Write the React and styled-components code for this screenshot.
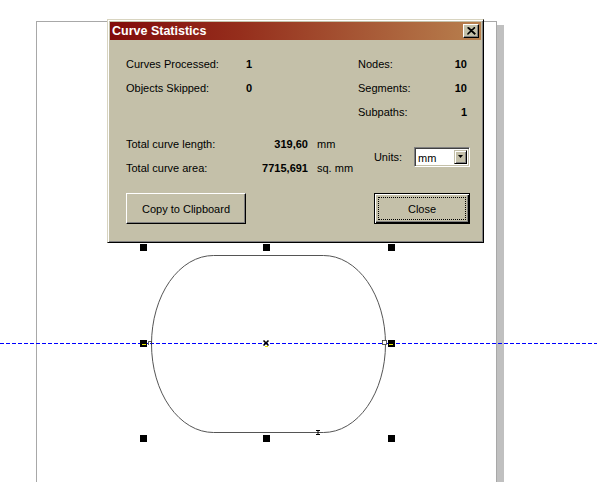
import React from "react";
import styled, { createGlobalStyle } from "styled-components";

const GlobalStyle = createGlobalStyle`
  html, body {
    margin: 0;
    padding: 0;
    background: #fff;
  }
  body {
    font-family: "Liberation Sans", Arial, sans-serif;
  }
`;

const FACE = "#c4c0a9";

const Workspace = styled.div`
  position: relative;
  width: 597px;
  height: 482px;
  overflow: hidden;
  background: #fff;
`;

const Page = styled.div`
  position: absolute;
  left: 36px;
  top: 21px;
  width: 459px;
  height: 480px;
  border: 1px solid #a8a8a8;
  background: #fff;
  box-shadow: 7px 4px 0 0 #c0c0c0;
`;

/* horizontal guideline dragged from the ruler */
const Guide = styled.div`
  position: absolute;
  left: 0;
  top: ${(p) => p.$y}px;
  width: 597px;
  height: 1px;
  background: repeating-linear-gradient(
    to right,
    #0000ff 0 4px,
    transparent 4px 6px
  );
`;

const Drawing = styled.svg`
  position: absolute;
  left: 0;
  top: 0;
  width: 597px;
  height: 482px;
`;

const Dialog = styled.div`
  position: absolute;
  left: 107px;
  top: 19px;
  width: 377px;
  height: 224px;
  box-sizing: border-box;
  background: ${FACE};
  border-top: 1px solid #d8d4c0;
  border-left: 1px solid #d8d4c0;
  border-right: 1px solid #000;
  border-bottom: 1px solid #000;
  box-shadow: inset 1px 1px 0 #fff, inset -1px -1px 0 #808080;
  padding: 2px;
  display: flex;
  flex-direction: column;
`;

const TitleBar = styled.div`
  height: 18px;
  display: flex;
  align-items: center;
  justify-content: space-between;
  padding: 0 2px 0 2px;
  background: linear-gradient(to right, #820b0b 0%, #952e1c 35%, #b8804e 100%);
`;

const Title = styled.span`
  color: #fff;
  font-size: 12.5px;
  font-weight: bold;
  line-height: 18px;
`;

const TitleButton = styled.div`
  width: 16px;
  height: 14px;
  box-sizing: border-box;
  background: ${FACE};
  border-top: 1px solid #fff;
  border-left: 1px solid #fff;
  border-right: 1px solid #000;
  border-bottom: 1px solid #000;
  box-shadow: inset -1px -1px 0 #808080;
  display: flex;
  align-items: center;
  justify-content: center;
`;

const Body = styled.div`
  flex: 1;
  display: flex;
  flex-direction: column;
  padding: 12px 11px 0 16px;
  font-size: 11px;
  color: #000;
`;

const TopSection = styled.div`
  display: flex;
  justify-content: space-between;
`;

const StatGrid = styled.div`
  display: grid;
  grid-template-columns: ${(p) => p.$cols};
  grid-auto-rows: 24px;
  align-items: center;
  width: ${(p) => p.$width || "auto"};
  margin-right: ${(p) => p.$mr || "0"};
`;

const Label = styled.span`
  white-space: nowrap;
`;

const Value = styled.span`
  font-weight: bold;
  text-align: ${(p) => (p.$right ? "right" : "left")};
  white-space: nowrap;
`;

const Unit = styled.span`
  padding-left: 9px;
  white-space: nowrap;
`;

const MiddleSection = styled.div`
  display: flex;
  justify-content: space-between;
  align-items: center;
  margin-top: 8px;
`;

const UnitsField = styled.div`
  display: flex;
  align-items: center;
  gap: 12px;
  margin-top: 1px;
`;

const Select = styled.div`
  width: 56px;
  height: 20px;
  box-sizing: border-box;
  display: flex;
  background: #fff;
  border-top: 1px solid #808080;
  border-left: 1px solid #808080;
  border-right: 1px solid #fff;
  border-bottom: 1px solid #fff;
  box-shadow: inset 1px 1px 0 #404040, inset -1px -1px 0 ${FACE};
  padding: 2px;
`;

const SelectText = styled.span`
  flex: 1;
  line-height: 16px;
  font-size: 11px;
  padding-left: 1px;
`;

const SelectArrow = styled.div`
  width: 13px;
  box-sizing: border-box;
  background: ${FACE};
  border-top: 1px solid ${FACE};
  border-left: 1px solid ${FACE};
  border-right: 1px solid #000;
  border-bottom: 1px solid #000;
  box-shadow: inset 1px 1px 0 #fff, inset -1px -1px 0 #808080;
  display: flex;
  align-items: center;
  justify-content: center;
`;

const ButtonRow = styled.div`
  display: flex;
  justify-content: space-between;
  margin-top: 13px;
`;

const Button = styled.div`
  width: ${(p) => p.$width};
  height: 31px;
  box-sizing: border-box;
  display: flex;
  align-items: center;
  justify-content: center;
  font-size: 11px;
  background: ${FACE};
  position: relative;
  ${(p) =>
    p.$default
      ? `
    border: 1px solid #000;
    box-shadow: inset 1px 1px 0 #fff, inset -1px -1px 0 #000, inset -2px -2px 0 #808080;
  `
      : `
    border-top: 1px solid #fff;
    border-left: 1px solid #fff;
    border-right: 1px solid #000;
    border-bottom: 1px solid #000;
    box-shadow: inset -1px -1px 0 #808080;
  `}
`;

const FocusRing = styled.span`
  position: absolute;
  left: 3px;
  top: 3px;
  right: 3px;
  bottom: 3px;
  border: 1px dotted #000;
`;

const handles = [
  [143, 247],
  [266, 247],
  [391, 247],
  [143, 343],
  [391, 343],
  [143, 438],
  [266, 438],
  [391, 438],
];

const CanvasDrawing = () => (
  <Drawing viewBox="0 0 597 482">
    <rect
      x="151.5"
      y="255.5"
      width="234"
      height="177"
      rx="62"
      ry="88.5"
      fill="none"
      stroke="#555"
      strokeWidth="1"
    />
    {handles.map(([x, y], i) => (
      <rect key={i} x={x - 3} y={y - 3} width="7" height="7" fill="#000" />
    ))}
    <rect x="142" y="344" width="4" height="1" fill="#e8e800" />
    <rect x="389" y="344" width="4" height="1" fill="#e8e800" />
    <path d="M148.5 345 V341.5 H151.5 V345" fill="none" stroke="#333" strokeWidth="0.8" />
    <rect x="382.5" y="340.5" width="4" height="4" fill="#fff" stroke="#333" strokeWidth="0.8" />
    <path
      d="M263.5 340.5 L268.5 345.5 M268.5 340.5 L263.5 345.5"
      stroke="#000"
      strokeWidth="1.6"
    />
    <rect x="265" y="346" width="3" height="1" fill="#e8e800" />
    <path d="M316 430.5 H320 M318 430.5 V434.5 M316 434.5 H320" stroke="#000" strokeWidth="1" />
  </Drawing>
);

const CloseGlyph = () => (
  <svg width="9" height="8" viewBox="0 0 9 8">
    <path d="M0.5 0.5 L8 7.5 M1.5 0.5 L8.5 7 M8 0.5 L0.5 7.5 M7.5 0.5 L0.5 7" stroke="#000" strokeWidth="1.1" />
  </svg>
);

const DownArrow = () => (
  <svg width="5" height="3" viewBox="0 0 5 3">
    <path d="M0 0 H5 L2.5 3 Z" fill="#000" />
  </svg>
);

const App = () => (
  <>
    <GlobalStyle />
    <Workspace>
      <Page />
      <Guide $y={343} />
      <CanvasDrawing />
      <Dialog>
        <TitleBar>
          <Title>Curve Statistics</Title>
          <TitleButton>
            <CloseGlyph />
          </TitleButton>
        </TitleBar>
        <Body>
          <TopSection>
            <StatGrid $cols="120px auto">
              <Label>Curves Processed:</Label>
              <Value>1</Value>
              <Label>Objects Skipped:</Label>
              <Value>0</Value>
            </StatGrid>
            <StatGrid $cols="1fr auto" $width="109px" $mr="3px">
              <Label>Nodes:</Label>
              <Value $right>10</Value>
              <Label>Segments:</Label>
              <Value $right>10</Value>
              <Label>Subpaths:</Label>
              <Value $right>1</Value>
            </StatGrid>
          </TopSection>
          <MiddleSection>
            <StatGrid $cols="120px 62px auto">
              <Label>Total curve length:</Label>
              <Value $right>319,60</Value>
              <Unit>mm</Unit>
              <Label>Total curve area:</Label>
              <Value $right>7715,691</Value>
              <Unit>sq. mm</Unit>
            </StatGrid>
            <UnitsField>
              <Label>Units:</Label>
              <Select>
                <SelectText>mm</SelectText>
                <SelectArrow>
                  <DownArrow />
                </SelectArrow>
              </Select>
            </UnitsField>
          </MiddleSection>
          <ButtonRow>
            <Button $width="120px">Copy to Clipboard</Button>
            <Button $width="96px" $default>
              <FocusRing />
              Close
            </Button>
          </ButtonRow>
        </Body>
      </Dialog>
    </Workspace>
  </>
);

export default App;
